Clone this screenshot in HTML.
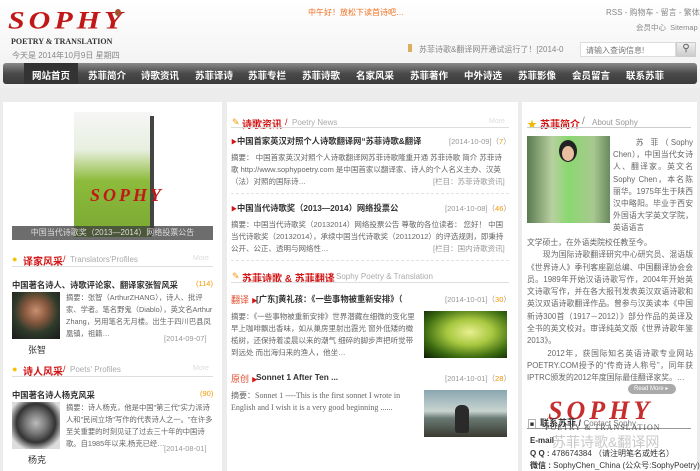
<!DOCTYPE html>
<html><head><meta charset="utf-8"><style>
*{margin:0;padding:0;box-sizing:border-box}
body{width:700px;height:471px;overflow:hidden;background:#ececec;font-family:"Liberation Sans","Noto Sans CJK SC",sans-serif;font-size:9px;color:#555;position:relative}
.a{position:absolute;white-space:nowrap}
.hdr{position:absolute;left:0;top:0;width:700px;height:88px;background:linear-gradient(#fff,#efefef)}
.nav{position:absolute;left:3px;top:63px;width:694px;height:21px;border-radius:3px;background:linear-gradient(#8a8a8a,#4a4a4a 50%,#3a3a3a);}
.nav span{position:absolute;top:5px;color:#fff;font-size:9.5px;font-weight:bold;transform:translateX(-50%)}
.panel{position:absolute;background:#fff;top:102px}
.ht{font-size:10px;font-weight:bold;color:#d21414}
.en{color:#aaa;font-size:8px}
.line{position:absolute;height:1px;background:#ddd}
.dash{position:absolute;height:0;border-top:1px dashed #e3e3e3}
.t{font-weight:bold;color:#333;font-size:8.3px}
.g{color:#999;font-size:7.5px}
.o{color:#f39800}
p.s{position:absolute;font-size:7.5px;line-height:12px;color:#666;white-space:normal}
</style></head><body>
<div class="hdr"></div>
<div class="a" style="left:8px;top:4px;font-family:'Liberation Serif',serif;font-style:italic;font-size:30px;color:#c01818;letter-spacing:4px;font-weight:bold;transform:scaleY(.85)">SOPHY</div>
<div class="a" style="left:115px;top:9px;width:6px;height:7px;border-radius:50%;background:#a0522d"></div>
<div class="a" style="left:11px;top:37px;font-family:'Liberation Serif',serif;font-size:8px;color:#333;font-weight:bold">POETRY &amp; TRANSLATION</div>
<div class="a" style="left:12px;top:50px;font-size:8px;color:#888">今天是 2014年10月9日 星期四</div>
<div class="a" style="left:308px;top:7px;font-size:8px;color:#f07020">中午好！放松下读首诗吧…</div>
<div class="a" style="left:606px;top:7px;font-size:8px;color:#888">RSS - 购物车 - 留言 - 繁体</div>
<div class="a" style="left:636px;top:22px;font-size:7.5px;color:#888">会员中心 &nbsp;Sitemap</div>
<div class="a" style="left:408px;top:44px;width:4px;height:8px;background:#d9b060"></div>
<div class="a" style="left:419px;top:44px;font-size:8px;color:#888">苏菲诗歌&amp;翻译网开通试运行了！[2014-0</div>
<div class="a" style="left:580px;top:42px;width:96px;height:15px;background:#fff;border:1px solid #ddd;font-size:8px;color:#777;padding:2px 5px">请输入查询信息!</div>
<div class="a" style="left:676px;top:42px;width:20px;height:15px;background:linear-gradient(#eee,#ccc);border:1px solid #ccc;text-align:center;font-size:10px;color:#555">⚲</div>
<div class="nav">
<div style="position:absolute;left:21px;top:0;width:54px;height:21px;background:#333"></div>
<span style="left:48px">网站首页</span><span style="left:104px">苏菲简介</span><span style="left:157px">诗歌资讯</span><span style="left:211px">苏菲译诗</span><span style="left:264px">苏菲专栏</span><span style="left:318px">苏菲诗歌</span><span style="left:372px">名家风采</span><span style="left:426px">苏菲著作</span><span style="left:480px">中外诗选</span><span style="left:534px">苏菲影像</span><span style="left:588px">会员留言</span><span style="left:642px">联系苏菲</span>
</div>

<div class="panel" style="left:3px;width:219px;height:369px"></div>
<div class="panel" style="left:227px;width:291px;height:369px"></div>
<div class="panel" style="left:522px;width:175px;height:369px"></div>

<!-- left -->
<div class="a" style="left:74px;top:112px;width:78px;height:125px;background:linear-gradient(#f6f6f6 0,#e8f0e0 30%,#8dbb3c 55%,#7aa832)"></div>
<div class="a" style="left:150px;top:116px;width:4px;height:120px;background:#444"></div>
<div class="a" style="left:90px;top:185px;font-family:'Liberation Serif',serif;font-style:italic;font-weight:bold;font-size:18px;color:#c01818;letter-spacing:3px">SOPHY</div>
<div class="a" style="left:12px;top:226px;width:201px;height:14px;background:rgba(60,60,60,.75);color:#ddd;font-size:8px;text-align:center;line-height:14px">中国当代诗歌奖（2013—2014）网络投票公告</div>

<div class="a" style="left:12px;top:254px;font-size:9px;color:#f5c400">●</div>
<div class="a ht" style="left:23px;top:253px">译家风采</div><div class="a" style="left:63px;top:254px;color:#d21414">/</div>
<div class="a en" style="left:70px;top:255px">Translators'Profiles</div>
<div class="a" style="left:193px;top:255px;font-size:7px;color:#ddd">More</div>
<div class="line" style="left:12px;top:266px;width:201px"></div>
<div class="a t" style="left:12px;top:279px">中国著名诗人、诗歌评论家、翻译家张智风采</div>
<div class="a o" style="left:196px;top:279px;font-size:7.5px">(114)</div>
<div class="a" style="left:12px;top:292px;width:48px;height:47px;background:radial-gradient(circle at 50% 40%,#c89070 0,#8a5a40 30%,#2e3a2a 60%,#1a1a1a)"></div>
<p class="s" style="left:66px;top:292px;width:150px;font-size:7.3px">摘要：张智（ArthurZHANG），诗人、批评家、学者。笔名野鬼（Diablo），英文名Arthur Zhang，另用笔名无月楼。出生于四川巴县凤凰镇，祖籍…</p>
<div class="a g" style="left:164px;top:334px">[2014-09-07]</div>
<div class="a" style="left:28px;top:343px;font-size:9px;color:#333">张智</div>

<div class="a" style="left:12px;top:364px;font-size:9px;color:#f5c400">●</div>
<div class="a ht" style="left:23px;top:363px">诗人风采</div><div class="a" style="left:63px;top:364px;color:#d21414">/</div>
<div class="a en" style="left:70px;top:365px">Poets' Profiles</div>
<div class="a" style="left:193px;top:365px;font-size:7px;color:#ddd">More</div>
<div class="line" style="left:12px;top:376px;width:201px"></div>
<div class="a t" style="left:12px;top:389px">中国著名诗人杨克风采</div>
<div class="a o" style="left:200px;top:389px;font-size:7.5px">(90)</div>
<div class="a" style="left:12px;top:402px;width:48px;height:47px;background:radial-gradient(circle at 50% 45%,#bbb 0,#777 30%,#333 55%,#ddd 80%)"></div>
<p class="s" style="left:66px;top:402px;width:150px;font-size:7.3px">摘要：诗人杨克，他是中国"第三代"实力派诗人和"民间立场"写作的代表诗人之一。"在许多至关重要的时刻见证了过去三十年的中国诗歌。自1985年以来,杨克已经…</p>
<div class="a g" style="left:164px;top:444px">[2014-08-01]</div>
<div class="a" style="left:28px;top:453px;font-size:9px;color:#333">杨克</div>

<!-- center -->
<div class="a" style="left:232px;top:117px;color:#f39800;font-size:9px">✎</div>
<div class="a ht" style="left:242px;top:116px">诗歌资讯</div><div class="a" style="left:285px;top:117px;color:#d21414">/</div>
<div class="a en" style="left:292px;top:118px">Poetry News</div>
<div class="a" style="left:489px;top:118px;font-size:7px;color:#ddd">More</div>
<div class="line" style="left:231px;top:127px;width:278px"></div>
<div class="a" style="left:231px;top:137px;color:#d21414;font-size:6px">▶</div>
<div class="a t" style="left:237px;top:135px">中国首家英汉对照个人诗歌翻译网“苏菲诗歌&amp;翻译</div>
<div class="a g" style="left:449px;top:136px">[2014-10-09]（<span class="o">7</span>）</div>
<p class="s" style="left:231px;top:152px;width:276px">摘要： 中国首家英汉对照个人诗歌翻译网苏菲诗歌隆重开通 苏菲诗歌 简介 苏菲诗歌 http://www.sophypoetry.com 是中国首家以翻译家、诗人的个人名义主办、汉英（法）对照的国际诗…</p>
<div class="a g" style="left:433px;top:176px">[栏目：苏菲诗歌资讯]</div>
<div class="dash" style="left:231px;top:193px;width:278px"></div>
<div class="a" style="left:231px;top:204px;color:#d21414;font-size:6px">▶</div>
<div class="a t" style="left:237px;top:202px">中国当代诗歌奖（2013—2014）网络投票公</div>
<div class="a g" style="left:445px;top:203px">[2014-10-08]（<span class="o">46</span>）</div>
<p class="s" style="left:231px;top:219px;width:276px">摘要：中国当代诗歌奖（20132014）网络投票公告 尊敬的各位读者： 您好！ 中国当代诗歌奖（20132014），承续中国当代诗歌奖（20112012）的评选规则，即秉持公开、公正、透明与网络性…</p>
<div class="a g" style="left:433px;top:243px">[栏目：国内诗歌资讯]</div>
<div class="dash" style="left:231px;top:260px;width:278px"></div>
<div class="a" style="left:232px;top:271px;color:#f39800;font-size:9px">✎</div>
<div class="a ht" style="left:242px;top:270px">苏菲诗歌 &amp; 苏菲翻译</div><div class="a" style="left:329px;top:271px;color:#d21414">/</div>
<div class="a en" style="left:336px;top:272px">Sophy Poetry &amp; Translation</div>
<div class="line" style="left:231px;top:282px;width:278px"></div>
<div class="a" style="left:231px;top:293px;color:#e04a2a;font-size:9px">翻译 <span style="font-size:6px;color:#d21414">▶</span></div>
<div class="a t" style="left:256px;top:293px">[广东]黄礼孩：《一些事物被重新安排》（</div>
<div class="a g" style="left:445px;top:294px">[2014-10-01]（<span class="o">30</span>）</div>
<p class="s" style="left:231px;top:311px;width:188px">摘要：《一些事物被重新安排》世界潜藏在细微的变化里 早上咖啡飘出香味，如从巢房里射出霞光 窗外低矮的橄榄树，还保持着凌晨以来的潮气 细碎的脚步声把听觉带到远处 而出海归来的渔人，他坐…</p>
<div class="a" style="left:424px;top:311px;width:83px;height:47px;background:radial-gradient(ellipse at 55% 45%,#e8ef90 0,#a8c840 35%,#3a6a10 70%,#0a1a05)"></div>
<div class="a" style="left:231px;top:372px;color:#e04a2a;font-size:9px">原创 <span style="font-size:6px;color:#d21414">▶</span></div>
<div class="a t" style="left:256px;top:372px">Sonnet 1 After Ten ...</div>
<div class="a g" style="left:445px;top:373px">[2014-10-01]（<span class="o">28</span>）</div>
<p class="s" style="left:231px;top:390px;width:190px;font-family:'Liberation Serif',serif;font-size:8px">摘要：Sonnet 1 ----This is the first sonnet I wrote in English and I wish it is a very good beginning ......</p>
<div class="a" style="left:424px;top:390px;width:83px;height:47px;background:linear-gradient(#8aa6b0,#c8d4d0 45%,#6a7a74 60%,#3a3a30)"></div>
<div class="a" style="left:455px;top:405px;width:14px;height:28px;border-radius:6px 6px 3px 3px;background:#2a2a2a"></div>

<!-- right -->
<div class="a" style="left:527px;top:116px;color:#f0b800;font-size:10px">★</div>
<div class="a ht" style="left:540px;top:116px">苏菲简介</div>
<div class="a" style="left:582px;top:116px;color:#888;font-size:10px">/</div>
<div class="a en" style="left:592px;top:118px;color:#999">About Sophy</div>
<div class="line" style="left:527px;top:127px;width:164px;background:#ccc"></div>
<div class="a" style="left:527px;top:136px;width:83px;height:87px;background:linear-gradient(90deg,#5a7a50,#b8d0a0 30%,#8ad870 50%,#a8c890 80%,#6a8a60)"></div>
<div class="a" style="left:559px;top:140px;width:18px;height:22px;border-radius:50%;background:#222"></div>
<div class="a" style="left:562px;top:146px;width:12px;height:15px;border-radius:50%;background:#e8c0a0"></div>
<p class="s" style="left:613px;top:137px;width:80px;font-size:7.8px;line-height:12.2px;text-align:justify">&nbsp;&nbsp;&nbsp;&nbsp;&nbsp;苏 菲（Sophy Chen），中国当代女诗人、翻译家。英文名Sophy Chen，本名陈丽华。1975年生于陕西汉中略阳。毕业于西安外国语大学英文学院，英语语言</p>
<p class="s" style="left:527px;top:237px;width:166px;font-size:7.8px;line-height:12.3px;text-align:justify">文学硕士，在外语类院校任教至今。<br>&nbsp;&nbsp;&nbsp;&nbsp;&nbsp;&nbsp;&nbsp;现为国际诗歌翻译研究中心研究员、混语版《世界诗人》季刊客座副总编、中国翻译协会会员。1989年开始汉语诗歌写作，2004年开始英文诗歌写作，并在各大报刊发表英汉双语诗歌和英汉双语诗歌翻译作品。曾参与汉英读本《中国新诗300首（1917－2012）》部分作品的英译及全书的英文校对。审译纯英文版《世界诗歌年鉴2013》。<br>&nbsp;&nbsp;&nbsp;&nbsp;&nbsp;&nbsp;&nbsp;2012年，获国际知名英语诗歌专业网站POETRY.COM授予的“传奇诗人称号”，同年获IPTRC颁发的2012年度国际最佳翻译家奖。…</p>
<div class="a" style="left:628px;top:384px;width:48px;height:10px;border-radius:5px;background:#aaa;color:#fff;font-size:6px;line-height:10px;padding-left:6px">Read More ▸</div>
<div class="a" style="left:548px;top:396px;font-family:'Liberation Serif',serif;font-style:italic;font-weight:bold;font-size:26px;color:#c01818;letter-spacing:4px;opacity:.9">SOPHY</div>
<div class="a" style="left:527px;top:416px;font-size:10px;color:#333">▣</div>
<div class="a" style="left:540px;top:416px;font-size:9px;font-weight:bold;color:#333">联系苏菲 / <span style="font-weight:normal;color:#777;font-size:8px">Contact Sophy</span></div>
<div class="line" style="left:527px;top:428px;width:164px;background:#999"></div>
<div class="a" style="left:545px;top:423px;font-family:'Liberation Serif',serif;font-size:8px;color:#555;letter-spacing:1px">POETRY &amp; TRANSLATION</div>
<div class="a" style="left:530px;top:436px;font-size:8px;color:#333;font-weight:bold">E-mail</div>
<div class="a" style="left:552px;top:432px;font-size:14px;color:#bbb;opacity:.8">苏菲诗歌&amp;翻译网</div>
<div class="a" style="left:530px;top:448px;font-size:8px;color:#333"><b>Q Q :</b> 478674384 （请注明笔名或姓名）</div>
<div class="a" style="left:530px;top:460px;font-size:8px;color:#333"><b>微信 :</b> SophyChen_China (公众号:SophyPoetry)</div>
</body></html>
